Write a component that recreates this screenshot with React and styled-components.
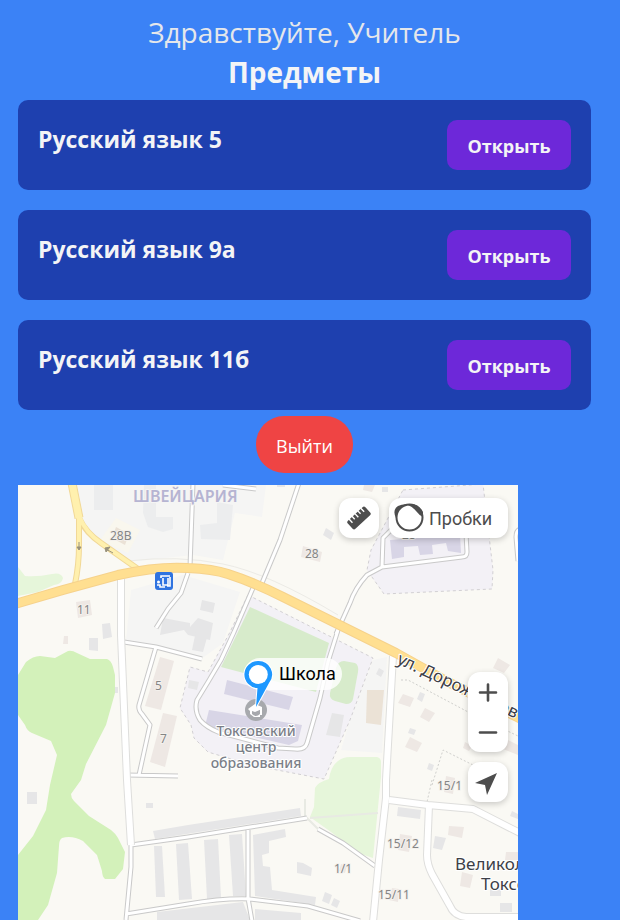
import React from "react";
import styled, { createGlobalStyle } from "styled-components";

const GlobalStyle = createGlobalStyle`
  *, *::before, *::after { box-sizing: border-box; }
  body {
    margin: 0;
    background: #3b82f6;
    color: #f3f4f6;
    font-family: "Open Sans", "Noto Sans", sans-serif;
  }
  button { font: inherit; border: 0; cursor: pointer; }
`;

const Page = styled.main`
  display: flex;
  flex-direction: column;
  min-height: 100vh;
  padding: 12px 29px 0 18px;
`;

const Header = styled.header`
  margin-bottom: 8px;
  text-align: center;
`;

const Greeting = styled.p`
  margin: 0;
  color: #e5e7eb;
  font-size: 28px;
  font-weight: 400;
  line-height: 40px;
`;

const Title = styled.h1`
  margin: 0;
  font-size: 28px;
  font-weight: 700;
  line-height: 40px;
`;

const SubjectList = styled.ul`
  display: flex;
  flex-direction: column;
  gap: 20px;
  margin: 0;
  padding: 0;
  list-style: none;
`;

const SubjectCard = styled.li`
  display: flex;
  align-items: flex-start;
  justify-content: space-between;
  min-height: 90px;
  padding: 20px;
  border-radius: 10px;
  background: #1e40af;
`;

const SubjectName = styled.h2`
  margin: 0;
  font-size: 23px;
  font-weight: 700;
  line-height: 38px;
`;

const OpenButton = styled.button`
  min-width: 124px;
  height: 50px;
  padding: 2px 16px 0;
  border-radius: 10px;
  background: #6d28d9;
  color: #f3f4f6;
  && { font-size: 18px; font-weight: 700; }
`;

const ExitButton = styled.button`
  align-self: center;
  min-width: 97px;
  height: 57px;
  margin: 6px 0 12px;
  padding: 2px 20px 0;
  border-radius: 28px;
  background: #ef4444;
  color: #ffffff;
  && { font-size: 18px; }
`;

const MapPanel = styled.section`
  position: relative;
  flex: 1;
  width: 100%;
  max-width: 500px;
  min-height: 400px;
  overflow: hidden;
  background: #faf9f4;
`;

const MapDrawing = styled.svg`
  position: absolute;
  inset: 0;
  width: 100%;
  height: 100%;
`;

const TopControls = styled.div`
  position: absolute;
  top: 13px;
  right: 10px;
  display: flex;
  gap: 10px;
`;

const SideControls = styled.div`
  position: absolute;
  top: 187px;
  right: 10px;
  display: flex;
  flex-direction: column;
  gap: 10px;
`;

const ZoomGroup = styled.div`
  display: flex;
  flex-direction: column;
  border-radius: 12px;
  background: #ffffff;
  box-shadow: 0 2px 6px rgba(0, 0, 0, 0.2);
`;

const MapButton = styled.button`
  display: flex;
  align-items: center;
  width: ${(p) => (p.$wide ? "119px" : "40px")};
  height: 40px;
  padding: 0;
  border-radius: 12px;
  background: ${(p) => (p.$flat ? "transparent" : "#ffffff")};
  box-shadow: ${(p) => (p.$flat ? "none" : "0 2px 6px rgba(0, 0, 0, 0.2)")};
  color: #4d4d4d;
  && { font-family: Roboto, "Liberation Sans", sans-serif; font-size: 18px; }
`;

const ControlIcon = styled.svg`
  display: block;
  flex: none;
  width: 40px;
  height: 40px;
`;

const shapes = {
  area: { fill: "#f5f5f4" },
  forest: { fill: "#d3f1ba" },
  grass: { fill: "#e6f6da" },
  pitch: { fill: "#d7ebcb" },
  campus: { fill: "#f3f1f6", stroke: "#d2d0d3", strokeDasharray: "3 3" },
  gray: { fill: "#e6e6e7" },
  pale: { fill: "#ecedee" },
  rose: { fill: "#eee8e4" },
  sand: { fill: "#ebe2d6" },
  lilac: { fill: "#d8d5e6" },
};

const grounds = [
  ["area", "M58 0H248L244 32 217 28 205 75 175 70 110 77 80 55 62 32Z"],
  ["area", "M113 105 165 90 222 107 205 158 183 174 108 156Z"],
  ["area", "M355 175 369 172 364 268 323 265 332 235Z"],
  ["grass", "M0 82 7 91Q20 92 34 89 43 87 45 93 44 99 36 100L20 107 0 111Z"],
  ["forest", "M0 190 8 177Q15 171 22 171L37 173 50 166Q54 165 59 168L72 174 89 174Q93 175 95 182L97 190V208L88 240 68 279 63 295 53 309Q53 313 56 316L71 331 93 345Q98 349 100 353L107 367 105 384 97 394H87Q84 391 84 386L79 370 65 356Q54 350 44 353 41 355 41 361L39 388 30 420 20 435H0V370L15 351 28 325 32 300 39 270 33 256 14 248Q9 246 7 240L0 230Z"],
  ["grass", "M332 272H359Q363 273 363 277V292L355 373 340 368 313 347 292 332 296 322 297 303Q300 297 311 294 313 281 320 276 325 272 332 272Z"],
  ["campus", "M230 110 355 173 332 235 306 294 233 280 190 267 176 253 173 240 162 223 172 182 190 187 211 149Z"],
  ["campus", "M385 5 465-1 475 85 474 104 366 109 349 85 353 65Z"],
  ["pitch", "M232 122 311 158 298 207 203 182Z"],
  ["pitch", "M326 176 337 178Q341 180 340 187L335 214Q334 219 328 219L317 216Q311 214 312 208L318 183Q320 176 326 176Z"],
  ["lilac", "M209 195 275 212 271 225 206 209Z"],
  ["lilac", "M191 225 284 240 280 256 271 260 187 241Z"],
  ["lilac", "M372 55 442 50 443 68 430 66 428 58 414 60 415 69 402 70 400 61 386 62V72L374 74Z"],
];

const buildings = [
  ["pale", "M76 0H95V25H76Z"],
  ["pale", "M126 0H138V32H155V44L145 47 130 42 125 28Z"],
  ["pale", "M199 17 215 20 212 55 183 54 182 40 199 38Z"],
  ["sand", "M98 42 111 49 107 60 94 53Z"],
  ["rose", "M58 117 72 115 74 130 60 133Z"],
  ["gray", "M84 139 92 138 94 152 85 154Z"],
  ["gray", "M71 153H80V166L71 165Z"],
  ["rose", "M46 151H50V159H45Z"],
  ["gray", "M145 133 172 138V142L180 133 195 138 192 155 170 150 166 145 142 150Z"],
  ["gray", "M184 115 197 118 195 128 182 125Z"],
  ["rose", "M285 61 304 67 302 77 283 72Z"],
  ["gray", "M308 43 316 48 313 55 305 50Z"],
  ["rose", "M346 0H357L354 7 345 5Z"],
  ["gray", "M364 2H370V7H364Z"],
  ["gray", "M259 0H267V2H259Z"],
  ["gray", "M179 141 190 149 185 167 174 165Z"],
  ["rose", "M142 172 156 176 143 225 127 221Z"],
  ["rose", "M145 228 159 231 147 282 132 277Z"],
  ["gray", "M171 195 181 197 179 205 170 203Z"],
  ["gray", "M314 228 326 230 322 252 308 250Z"],
  ["sand", "M349 205H366L363 240 348 238Z"],
  ["gray", "M97 202H100V208H97Z"],
  ["gray", "M9 307H19V319H9Z"],
  ["gray", "M128 318H135V323H128Z"],
  ["gray", "M135 346 170 340 282 323 283 331 137 354Z"],
  ["gray", "M136 361H144L147 412H138Z"],
  ["gray", "M158 359 170 358 174 414 161 415Z"],
  ["gray", "M186 355 200 354 203 413 189 414Z"],
  ["gray", "M211 350 224 349 228 411H215Z"],
  ["gray", "M235 350 267 344 268 352 251 356V368L244 370 245 381 252 382 254 405 298 412 297 420 237 411Z"],
  ["gray", "M139 427 225 417 232 435H139Z"],
  ["gray", "M237 424 283 428V435H237Z"],
  ["gray", "M279 377 285 378 294 383 293 391 279 388Z"],
  ["gray", "M307 407 314 410 311 419 304 416ZM316 413 322 416 319 423 313 420Z"],
  ["rose", "M323 379 329 381 327 388 321 386Z"],
  ["rose", "M385 209 396 213 392 222 380 218ZM407 223 417 228 411 237 402 232ZM392 252 404 258 399 267 387 262Z"],
  ["gray", "M402 207 407 209 404 217 399 214ZM392 243 398 245 396 250 390 248ZM411 278 416 280 414 286 409 284ZM361 183 366 186 363 192 358 189Z"],
  ["rose", "M480 173 492 180 486 188 475 183ZM490 255 500 260V270L485 264ZM428 291 437 293 435 309 426 307ZM447 257 454 261 451 266 445 263Z"],
  ["gray", "M380 322 403 325 402 334 379 331Z"],
  ["rose", "M382 349 394 351 391 367 380 365ZM431 341 446 342 444 353 430 350ZM444 387 455 390 452 403 442 401ZM374 403 381 404 380 417 371 415ZM488 367H500V375H487Z"],
  ["gray", "M417 351 428 353 424 365 415 363ZM482 418H494V427H482ZM494 326 500 329V334L492 331ZM472 404H483V411H472Z"],
];

const lanes = [
  "M175-2 172 82M170 88 163 108 150 124 138 143",
  "M205 0 238 4",
  "M281-2 262 55 244 98",
  "M235 103 216 147 203 175 190 197 179 215Q176 225 182 235 188 242 200 247L260 263 277 264Q287 265 289 258L302 213 310 177 320 145",
  "M318 149 332 118Q337 103 349 90L364 82 365 53 378 40M364 82 444 72Q449 72 449 67L448 48",
  "M106 157 138 162 184 174M138 162 121 220Q120 225 124 229L132 240 121 290M109 290 160 291",
  "M113 360 170 352 289 333M113 360V382L108 435M108 429 170 419Q205 413 232 414L290 421 342 436M230 345V413L234 436M300 344 325 358 357 381",
  "M504 44Q498 44 498 52L500 76",
];

const streets = [
  "M103 94V150L109 295 113 360",
  "M375 171 368 295 368 313 361 375 355 437",
  "M371 315 410 320 455 324 502 348",
  "M411 320 409 370Q409 379 414 389L432 421Q436 431 448 432H502",
];

const labels = [
  ["28В", 92, 55],
  ["11", 59, 129],
  ["28", 287, 73],
  ["28", 384, 54],
  ["5", 137, 205],
  ["7", 142, 258],
  ["15/1", 419, 305],
  ["15/12", 369, 363],
  ["15/11", 360, 414],
  ["1/1", 316, 388],
];

const MapText = styled.text`
  font-family: "Noto Sans", "Open Sans", sans-serif;
  font-size: ${(p) => p.$size}px;
  font-weight: ${(p) => p.$weight || 400};
  fill: ${(p) => p.$color};
  stroke: ${(p) => p.$halo || "none"};
  stroke-width: 2px;
  stroke-linejoin: round;
  paint-order: stroke;
`;

function CityMap() {
  return (
    <MapDrawing viewBox="0 0 500 435" preserveAspectRatio="xMinYMin slice" role="img" aria-label="Карта">
      {grounds.map(([kind, d]) => <path key={d} d={d} {...shapes[kind]} />)}
      <path d="M98 33 122 45 110 68 82 55Z" fill="#f9f7ee" />
      {buildings.map(([kind, d]) => <path key={d} d={d} {...shapes[kind]} />)}
      <g fill="none" stroke="#d0d0cd" strokeDasharray="2 2">
        <path d="M383 195 390 195 452 228 500 251M414 300 425 265 455 280M414 295 409 317" />
      </g>
      <path d="M110 76Q160 70 205 79T320 130" fill="none" stroke="#ecebe6" />
      <path d="M287 314V331L300 344M292 333 360 328" fill="none" stroke="#e8eae3" strokeWidth="2" />
      <g fill="none" strokeLinejoin="round">
        {lanes.map((d) => <path key={d} d={d} stroke="#c9c9c9" strokeWidth="5" />)}
        {lanes.map((d) => <path key={d} d={d} stroke="#ffffff" strokeWidth="3" />)}
        {streets.map((d) => <path key={d} d={d} stroke="#dededc" strokeWidth="8" />)}
        {streets.map((d) => <path key={d} d={d} stroke="#ffffff" strokeWidth="6" />)}
        <path d="M61 33V60Q61 80 57 99M61 33Q68 48 83 58L120 84" stroke="#f1d897" strokeWidth="6" />
        <path d="M54-2 61 33" stroke="#f1d897" strokeWidth="9" />
        <path d="M61 31V60Q61 80 57 99M61 31Q68 48 83 58L120 84" stroke="#fff0ae" strokeWidth="4" />
        <path d="M54-2 61 33" stroke="#fff0ae" strokeWidth="7" />
        <path d="M-3 119 45 105 100 90Q140 81 170 83 195 84 210 89 235 97 265 112L378 168 430 197 503 234" stroke="#f6d28c" strokeWidth="10" />
        <path d="M-3 119 45 105 100 90Q140 81 170 83 195 84 210 89 235 97 265 112L378 168 430 197 503 234" stroke="#ffdf91" strokeWidth="8" />
      </g>
      <g fill="#99927c" stroke="#99927c">
        <path d="M61 57V64M59 62H63L61 65ZM88 64 95 68M92 62 88 67 87 63Z" />
      </g>
      <MapText $size={16} $weight={600} $color="#b6b4d2" $halo="#f5f5f4" x="115" y="17">ШВЕЙЦАРИЯ</MapText>
      {labels.map(([text, x, y]) => (
        <MapText key={text + x} $size={12} $color="#858585" $halo="#f4f1ed" x={x} y={y}>{text}</MapText>
      ))}
      <MapText $size={17} $color="#3d4047" $halo="#ffffff" transform="translate(378 178) rotate(25)">ул. Дорожников</MapText>
      <MapText $size={17} $color="#3d4047" $halo="#ffffff" x="437" y="385">Великолукское</MapText>
      <MapText $size={17} $color="#3d4047" $halo="#ffffff" x="463" y="405">Токсово</MapText>

      <rect x="137" y="87" width="18" height="18" rx="3" fill="#2f73e0" />
      <path d="M143 93V91H152M145 93V100H150V93M149 101H152V92" fill="none" stroke="#ffffff" strokeWidth="1.6" />
      <circle cx="140.500" cy="97" r="1.500" fill="#ffffff" />
      <path d="M139 100H142V102H147" fill="none" stroke="#ffffff" strokeWidth="1.6" />

      <circle cx="238" cy="225" r="11" fill="#a7a9ad" />
      <path d="M230 224 237 219 244 222 244 224 237 227 234 226V229Q238 233 242 229V232H236L232 229V226Z" fill="#ffffff" />
      <path d="M243 222V230" stroke="#ffffff" strokeWidth="2" />
      <g textAnchor="middle">
        <MapText $size={14} $weight={500} $color="#7b7f88" $halo="#ffffff" x="238" y="251">Токсовский</MapText>
        <MapText $size={14} $weight={500} $color="#7b7f88" $halo="#ffffff" x="238" y="267">центр</MapText>
        <MapText $size={14} $weight={500} $color="#7b7f88" $halo="#ffffff" x="238" y="283">образования</MapText>
      </g>

      <rect x="226" y="173" width="98" height="32" rx="16" fill="#ffffff" fillOpacity="0.8" />
      <path d="M240.300 176A13.500 13.500 0 0 1 251 198L238 222 239.500 203A13.500 13.500 0 0 1 240.300 176Z" fill="#1e98ff" stroke="#ffffff" strokeWidth="2" strokeLinejoin="round" paintOrder="stroke" />
      <circle cx="240.300" cy="189.500" r="9.500" fill="#ffffff" />
      <text x="261" y="195" fill="#000000" fontFamily="Roboto, Liberation Sans, sans-serif" fontSize="18">Школа</text>
    </MapDrawing>
  );
}

function RulerIcon() {
  return (
    <ControlIcon viewBox="0 0 40 40" aria-hidden="true">
      <g transform="rotate(-43 20 20)">
        <rect x="8" y="14.500" width="24" height="11" rx="2" fill="#4d4d4d" />
        <path d="M12 14V19M16 14V18M20 14V19M24 14V18M28 14V19" stroke="#ffffff" strokeWidth="1.4" />
      </g>
    </ControlIcon>
  );
}

function TrafficIcon() {
  return (
    <ControlIcon viewBox="0 0 40 40" aria-hidden="true">
      <path d="M7 20Q3 12 9 8 15 5 22 7L12 11Q7 15 7 20Z" fill="#4d4d4d" />
      <circle cx="20.500" cy="19.500" r="13" fill="#ffffff" stroke="#4d4d4d" strokeWidth="2" />
      <path d="M18 6.500Q29 4 34 14V19Q30 17 27 13T18 6.500Z" fill="#4d4d4d" />
    </ControlIcon>
  );
}

const subjects = ["Русский язык 5", "Русский язык 9а", "Русский язык 11б"];

export default function App() {
  return (
    <>
      <GlobalStyle />
      <Page>
        <Header>
          <Greeting>Здравствуйте, Учитель</Greeting>
          <Title>Предметы</Title>
        </Header>
        <SubjectList>
          {subjects.map((name) => (
            <SubjectCard key={name}>
              <SubjectName>{name}</SubjectName>
              <OpenButton type="button">Открыть</OpenButton>
            </SubjectCard>
          ))}
        </SubjectList>
        <ExitButton type="button">Выйти</ExitButton>
        <MapPanel>
          <CityMap />
          <TopControls>
            <MapButton type="button" aria-label="Измерить расстояние"><RulerIcon /></MapButton>
            <MapButton type="button" $wide><TrafficIcon />Пробки</MapButton>
          </TopControls>
          <SideControls>
            <ZoomGroup>
              <MapButton type="button" $flat aria-label="Приблизить">
                <ControlIcon viewBox="0 0 40 40"><path d="M12 20.500H28M20 12.500V28.500" stroke="#4d4d4d" strokeWidth="2.600" strokeLinecap="round" /></ControlIcon>
              </MapButton>
              <MapButton type="button" $flat aria-label="Отдалить">
                <ControlIcon viewBox="0 0 40 40"><path d="M12 20.500H28" stroke="#4d4d4d" strokeWidth="2.600" strokeLinecap="round" /></ControlIcon>
              </MapButton>
            </ZoomGroup>
            <MapButton type="button" aria-label="Моё местоположение">
              <ControlIcon viewBox="0 0 40 40"><path d="M29 11 19 33 17 23 7 21Z" fill="#4d4d4d" /></ControlIcon>
            </MapButton>
          </SideControls>
        </MapPanel>
      </Page>
    </>
  );
}
